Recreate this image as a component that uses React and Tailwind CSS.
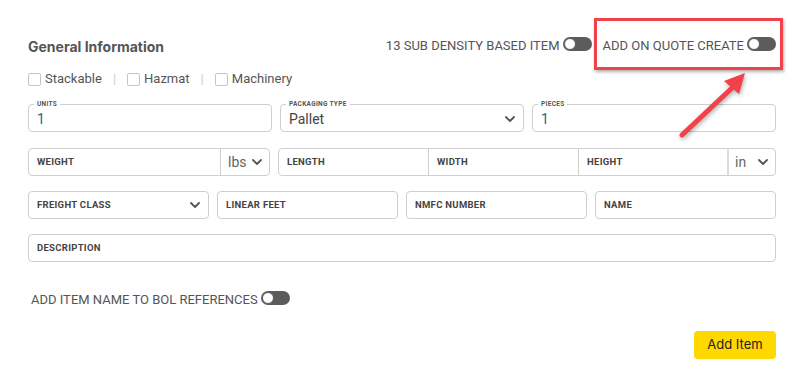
import React from 'react';

function Toggle() {
  return (
    <span className="inline-flex items-center w-[29px] h-[14px] rounded-full bg-[#5c5c5c] p-[1px]">
      <span className="w-[12px] h-[12px] rounded-full bg-white border border-[#5c5c5c]" />
    </span>
  );
}

function Chevron({ className = '' }) {
  return (
    <svg width="10" height="6" viewBox="0 0 10 6" className={className}>
      <path d="M1 1l4 4 4-4" fill="none" stroke="#555" strokeWidth="1.8" strokeLinecap="round" strokeLinejoin="round" />
    </svg>
  );
}

function Check({ label }) {
  return (
    <span className="flex items-center gap-[4px]">
      <span className="w-[13px] h-[13px] border border-[#c4c4c4] rounded-[2px] bg-white" />
      <span>{label}</span>
    </span>
  );
}

function Floating({ label, value, select }) {
  return (
    <div className="relative h-[28px] border border-[#cfcfcf] rounded-[4px] flex items-center pl-[8px] pr-[8px]">
      <span className="absolute left-[5px] top-[-5px] bg-white px-[3px] text-[6.5px] leading-[8px] font-bold tracking-[0.3px] text-[#555]">{label}</span>
      <span className="flex-1 text-[14px] text-[#3d5a80] pt-[3px]">{value}</span>
      {select && <Chevron className="mt-[2px]" />}
    </div>
  );
}

function Field({ label, select, className = '' }) {
  return (
    <div className={`h-[28px] border border-[#cfcfcf] rounded-[4px] flex items-center pl-[8px] pr-[8px] ${className}`}>
      <span className="flex-1 text-[9.5px] font-bold tracking-[0.3px] text-[#444]">{label}</span>
      {select && <Chevron />}
    </div>
  );
}

export default function App() {
  return (
    <div className="relative w-[803px] h-[387px] bg-white pl-[28px] pr-[27px] pt-[36px] text-[#555]" style={{ fontFamily: 'Roboto, "Liberation Sans", sans-serif' }}>
      {/* Header */}
      <div className="flex items-center justify-between h-[20px]">
        <h2 className="text-[14px] font-bold text-[#555]" style={{ fontFamily: 'Inter, Roboto, sans-serif' }}>General Information</h2>
        <div className="flex items-center text-[13px] text-[#555]">
          <span>13 SUB DENSITY BASED ITEM</span>
          <span className="ml-[3px]"><Toggle /></span>
          <span className="ml-[11px]">ADD ON QUOTE CREATE</span>
          <span className="ml-[3px]"><Toggle /></span>
        </div>
      </div>

      {/* Checkboxes */}
      <div className="mt-[15px] h-[16px] flex items-center text-[13px] text-[#555]">
        <Check label="Stackable" />
        <span className="mx-[11px] text-[#ccc]">|</span>
        <Check label="Hazmat" />
        <span className="mx-[11px] text-[#ccc]">|</span>
        <Check label="Machinery" />
      </div>

      {/* Units / packaging / pieces */}
      <div className="mt-[17px] grid grid-cols-3 gap-[8px]">
        <Floating label="UNITS" value="1" />
        <Floating label="PACKAGING TYPE" value={<span className="text-[#444]">Pallet</span>} select />
        <Floating label="PIECES" value="1" />
      </div>

      {/* Weight / dimensions */}
      <div className="mt-[16px] flex gap-[8px]">
        <div className="w-[242px] h-[28px] border border-[#cfcfcf] rounded-[4px] flex">
          <div className="flex-1 flex items-center pl-[8px] text-[9.5px] font-bold tracking-[0.3px] text-[#444]">WEIGHT</div>
          <div className="w-[49px] border-l border-[#cfcfcf] flex items-center justify-between pl-[7px] pr-[7px]">
            <span className="text-[14px] text-[#666]">lbs</span>
            <Chevron />
          </div>
        </div>
        <div className="flex-1 h-[28px] border border-[#cfcfcf] rounded-[4px] flex">
          <div className="w-[149px] flex items-center pl-[8px] text-[9.5px] font-bold tracking-[0.3px] text-[#444]">LENGTH</div>
          <div className="w-[150px] border-l border-[#cfcfcf] flex items-center pl-[8px] text-[9.5px] font-bold tracking-[0.3px] text-[#444]">WIDTH</div>
          <div className="flex-1 border-l border-[#cfcfcf] flex items-center pl-[8px] text-[9.5px] font-bold tracking-[0.3px] text-[#444]">HEIGHT</div>
          <div className="w-[48px] border-l-2 border-[#dcdcdc] flex items-center justify-between pl-[6px] pr-[7px]">
            <span className="text-[14px] text-[#666]">in</span>
            <Chevron />
          </div>
        </div>
      </div>

      {/* Freight class etc */}
      <div className="mt-[15px] grid grid-cols-4 gap-[8px]">
        <Field label="FREIGHT CLASS" select />
        <Field label="LINEAR FEET" />
        <Field label="NMFC NUMBER" />
        <Field label="NAME" />
      </div>

      {/* Description */}
      <div className="mt-[15px]">
        <Field label="DESCRIPTION" />
      </div>

      {/* BOL toggle */}
      <div className="mt-[30px] h-[16px] pl-[3px] flex items-center text-[13px] text-[#555]">
        <span>ADD ITEM NAME TO BOL REFERENCES</span>
        <span className="ml-[3px]"><Toggle /></span>
      </div>

      {/* Button */}
      <div className="mt-[23px] flex justify-end">
        <button className="w-[82px] h-[28px] rounded-[4px] bg-[#ffd800] text-[13px] text-[#222]" style={{ fontFamily: 'Inter, sans-serif' }}>Add Item</button>
      </div>

      {/* Annotation box */}
      <div className="absolute left-[594px] top-[18px] w-[189px] h-[52px] border-[3px] border-[#f2414a] shadow-[1px_2px_3px_rgba(0,0,0,0.3)]" />

      {/* Annotation arrow */}
      <svg className="absolute left-0 top-0" width="803" height="387" style={{ filter: 'drop-shadow(1px 2px 2px rgba(0,0,0,0.3))' }}>
        <line x1="682" y1="135" x2="733" y2="87" stroke="#f2414a" strokeWidth="5" strokeLinecap="round" />
        <polygon points="745,73 724,81 739,94" fill="#f2414a" />
      </svg>
    </div>
  );
}
